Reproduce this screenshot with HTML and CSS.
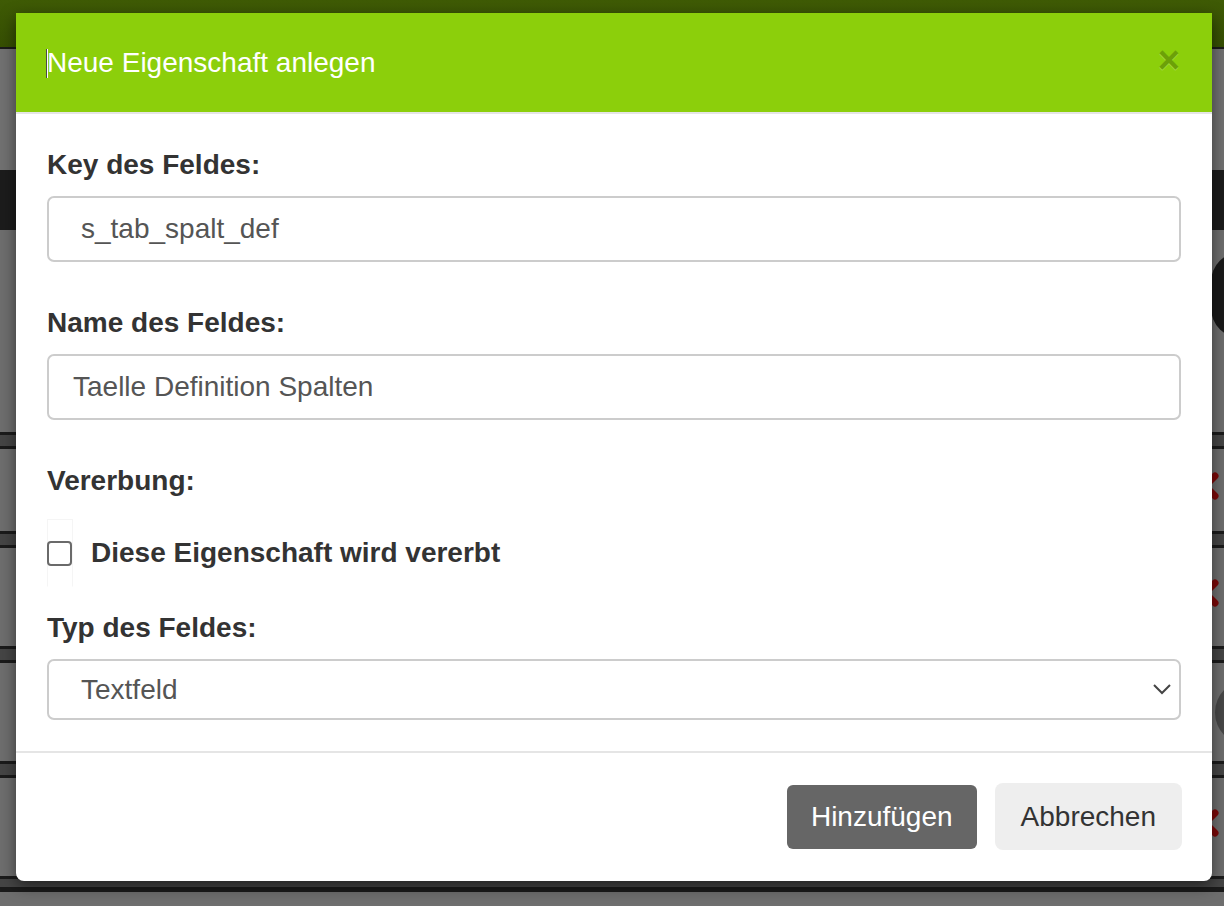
FILE: index.html
```html
<!DOCTYPE html>
<html lang="de">
<head>
  <meta charset="UTF-8">
  <title>Neue Eigenschaft anlegen</title>
  <link rel="stylesheet" href="styles.css">
</head>
<body>
  <!-- === PAGE BEHIND THE DIALOG (dimmed) === -->
  <div class="page">
    <div class="page-top"></div>
    <div class="page-nav"></div>
    <div class="page-band"></div>
    <div class="page-row page-row-first"><span class="pill"></span></div>
    <div class="page-row page-row-a">
      <svg class="del" width="30" height="30" viewBox="0 0 30 30"><path d="M5 5 L25 25 M25 5 L5 25" /></svg>
    </div>
    <div class="page-row page-row-b">
      <svg class="del" width="30" height="30" viewBox="0 0 30 30"><path d="M5 5 L25 25 M25 5 L5 25" /></svg>
    </div>
    <div class="page-row page-row-b"><span class="dot"></span></div>
    <div class="page-row page-row-b">
      <svg class="del" width="30" height="30" viewBox="0 0 30 30"><path d="M5 5 L25 25 M25 5 L5 25" /></svg>
    </div>
    <div class="page-foot"></div>
  </div>

  <!-- === DIALOG === -->
  <div class="modal">
    <div class="modal-header">
      <h4 class="modal-title"><span class="caret"></span>Neue Eigenschaft anlegen</h4>
      <button class="close" type="button">&times;</button>
    </div>

    <div class="modal-body">
      <label class="field-label">Key des Feldes:</label>
      <div class="field-input">s_tab_spalt_def</div>

      <label class="field-label field-gap">Name des Feldes:</label>
      <div class="field-input field-input-tight">Taelle Definition Spalten</div>

      <label class="field-label field-gap">Vererbung:</label>
      <div class="check-row">
        <span class="check-frame"><span class="check-box"></span></span>
        <span class="check-label">Diese Eigenschaft wird vererbt</span>
      </div>

      <label class="field-label field-gap-small">Typ des Feldes:</label>
      <div class="field-select">
        <span>Textfeld</span>
        <svg width="18" height="11" viewBox="0 0 18 11"><path d="M1 1 L9 9 L17 1" /></svg>
      </div>
    </div>

    <div class="modal-footer">
      <button class="btn btn-primary" type="button">Hinzufügen</button>
      <button class="btn btn-default" type="button">Abbrechen</button>
    </div>
  </div>
</body>
</html>
```

FILE: styles.css
```css
body {
  margin: 0;
  font-family: "Liberation Sans", Arial, sans-serif;
  background: #444444;
  overflow: hidden;
}

/* === BACKGROUND PAGE === */
.page {
  height: 906px;
  overflow: hidden;
  background: #454545;
}

.page-top {
  height: 47px;
  background: linear-gradient(#3f5b05, #364f03);
  border-bottom: 2px solid #1b1b1b;
}

.page-nav {
  height: 121px;
  background: #717171;
}

.page-band {
  height: 60px;
  background: #1c1c1c;
}

.page-row {
  display: flex;
  align-items: center;
  justify-content: flex-end;
  background: #6e6e6e;
  border-top: 3px solid #1b1b1b;
  border-bottom: 3px solid #1b1b1b;
  margin-bottom: 11px;
}

.page-row-first {
  height: 202px;
  border-top: 0;
  align-items: flex-start;
}

.page-row-a {
  height: 82px;
}

.page-row-b {
  height: 98px;
}

.pill {
  width: 60px;
  height: 86px;
  margin-top: 22px;
  margin-right: -47px;
  border-radius: 43px;
  background: #1a1a1a;
}

.dot {
  width: 65px;
  height: 65px;
  margin-right: -56px;
  border-radius: 50%;
  background: #474747;
}

.del {
  margin-right: 4px;
  margin-top: -8px;
}

.del path {
  stroke: #7d0808;
  stroke-width: 7;
  stroke-linecap: round;
  fill: none;
}

.page-foot {
  height: 20px;
  background: #6e6e6e;
  border-top: 3px solid #1b1b1b;
  margin-top: -3px;
  box-shadow: inset 0 2px 0 #1b1b1b;
}

/* === DIALOG === */
.modal {
  position: absolute;
  top: 13px;
  left: 16px;
  width: 1196px;
  background: #ffffff;
  border-radius: 0 0 8px 8px;
  box-shadow: 0 5px 15px rgba(0, 0, 0, 0.5);
}

.modal-header {
  height: 99px;
  box-sizing: content-box;
  display: flex;
  align-items: center;
  justify-content: space-between;
  padding: 0 32px 0 30px;
  background: #8ccf0b;
  border-bottom: 2px solid #e5e5e5;
}

.modal-title {
  margin: 0;
  font-size: 28px;
  font-weight: normal;
  line-height: 34px;
  color: #ffffff;
  display: flex;
  align-items: center;
}

.caret {
  display: inline-block;
  width: 1px;
  height: 29px;
  background: #4a4a4a;
  box-shadow: 1px 0 0 #ffffff;
  margin-top: 2px;
}

.close {
  border: 0;
  padding: 0;
  background: none;
  font-family: "Liberation Sans", Arial, sans-serif;
  font-size: 38px;
  font-weight: bold;
  line-height: 1;
  color: #000000;
  opacity: 0.22;
  text-shadow: 0 1px 0 #ffffff;
  margin-top: -6px;
}

.modal-body {
  padding: 31px 31px 31px;
}

.field-label {
  display: block;
  font-size: 28px;
  font-weight: bold;
  line-height: 40px;
  color: #333333;
  margin-bottom: 11px;
}

.field-gap {
  margin-top: 41px;
}

.field-gap-small {
  margin-top: 21px;
}

.field-input,
.field-select {
  box-sizing: border-box;
  display: flex;
  align-items: center;
  height: 66px;
  padding: 0 32px;
  border: 2px solid #cccccc;
  border-radius: 7px;
  font-size: 28px;
  color: #555555;
}

.field-input-tight {
  padding-left: 24px;
}

.check-row {
  display: flex;
  align-items: center;
  margin-top: 18px;
  height: 68px;
}

.check-frame {
  box-sizing: border-box;
  width: 26px;
  height: 68px;
  display: flex;
  align-items: center;
  border: 1px solid #f5f5f5;
  border-bottom-color: #ffffff;
}

.check-box {
  box-sizing: border-box;
  width: 26px;
  height: 25px;
  margin-left: -1px;
  border: 2px solid #6a6a6a;
  border-radius: 4px;
  background: #ffffff;
}

.check-label {
  margin-left: 18px;
  font-size: 28px;
  font-weight: bold;
  color: #333333;
}

.field-select {
  height: 61px;
  justify-content: space-between;
  padding-right: 8px;
}

.field-select path {
  fill: none;
  stroke: #444444;
  stroke-width: 2;
}

.modal-footer {
  display: flex;
  justify-content: flex-end;
  align-items: center;
  gap: 18px;
  padding: 30px 30px 31px;
  border-top: 2px solid #e5e5e5;
}

.btn {
  border: 0;
  font-family: "Liberation Sans", Arial, sans-serif;
  font-size: 28px;
  line-height: 1;
  cursor: pointer;
}

.btn-primary {
  height: 64px;
  padding: 0 24px;
  background: #666666;
  color: #ffffff;
  border-radius: 6px;
}

.btn-default {
  height: 67px;
  padding: 0 26px;
  background: #eeeeee;
  color: #333333;
  border-radius: 8px;
}
```
